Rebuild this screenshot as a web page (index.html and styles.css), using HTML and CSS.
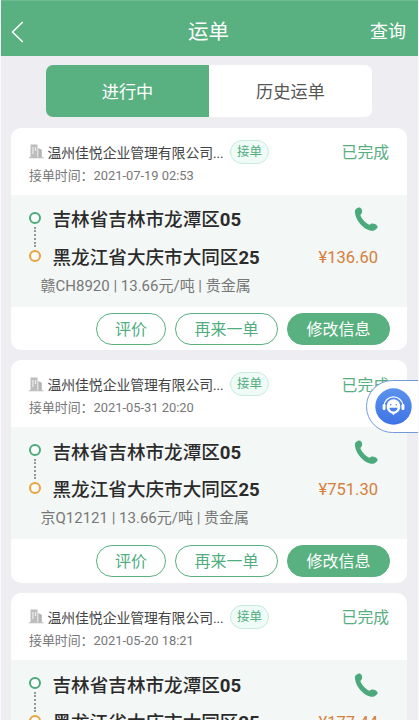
FILE: index.html
```html
<!DOCTYPE html>
<html lang="zh-CN">
<head>
<meta charset="utf-8">
<title>运单</title>
<link rel="stylesheet" href="styles.css">
</head>
<body>
<svg class="defs" width="0" height="0" aria-hidden="true">
  <symbol id="building" viewBox="0 0 15 16">
    <path d="M1.500 1.500h7v13h-7z" fill="#bdbdbd"/>
    <path d="M9.300 5l3.500 1.800v7.700H9.300z" fill="#b4b4b4"/>
    <path d="M3.300 4h1.200v7H3.300zM5.900 4h1.200v4H5.900z" fill="#ececec"/>
    <path d="M0 14.200h14.500v1H0z" fill="#b4b4b4"/>
  </symbol>
  <symbol id="phone" viewBox="0 0 24 24">
    <path d="M1 3.500C2 1.500 4.500-.2 6.300.8c1.700 1 2.300 3.600 1.500 5.100C7.300 7 6.100 7.400 6.500 8.600c1.200 3.300 4.700 7.200 8.300 9 1.300.6 1.700-.8 3-1.100 2-.4 5 1.100 5.700 2.700.7 1.800-1.700 4-4 4.500C11.500 25 .2 13 1 3.500z" fill="#4ba97b"/>
  </symbol>
</svg>
<div class="screen">
  <header class="bar">
    <svg class="back" viewBox="0 0 13 22"><path d="M11.800 1L1.500 11l10.300 10" fill="none" stroke="#fff" stroke-width="1.500"/></svg>
    <h1>运单</h1>
    <span class="query">查询</span>
  </header>
  <nav class="tabs"><span class="tab active">进行中</span><span class="tab">历史运单</span></nav>
  <main class="list">
    <article class="card">
      <div class="head">
        <div class="line"><svg class="building"><use href="#building"/></svg><span class="company">温州佳悦企业管理有限公司...</span><span class="tag">接单</span><span class="status">已完成</span></div>
        <p class="time">接单时间：<span>2021-07-19 02:53</span></p>
      </div>
      <div class="body">
        <div class="rail"><i class="dot"></i><i class="dash"></i><i class="dot end"></i></div>
        <div class="row"><b>吉林省吉林市龙潭区<strong>05</strong></b><svg class="phone"><use href="#phone"/></svg></div>
        <div class="row"><b>黑龙江省大庆市大同区<strong>25</strong></b><span class="price">¥136.60</span></div>
        <p class="info">赣CH8920 | 13.66元/吨 | 贵金属</p>
      </div>
      <div class="foot"><span class="btn short">评价</span><span class="btn">再来一单</span><span class="btn solid">修改信息</span></div>
    </article>
    <article class="card">
      <div class="head">
        <div class="line"><svg class="building"><use href="#building"/></svg><span class="company">温州佳悦企业管理有限公司...</span><span class="tag">接单</span><span class="status">已完成</span></div>
        <p class="time">接单时间：<span>2021-05-31 20:20</span></p>
      </div>
      <div class="body">
        <div class="rail"><i class="dot"></i><i class="dash"></i><i class="dot end"></i></div>
        <div class="row"><b>吉林省吉林市龙潭区<strong>05</strong></b><svg class="phone"><use href="#phone"/></svg></div>
        <div class="row"><b>黑龙江省大庆市大同区<strong>25</strong></b><span class="price">¥751.30</span></div>
        <p class="info">京Q12121 | 13.66元/吨 | 贵金属</p>
      </div>
      <div class="foot"><span class="btn short">评价</span><span class="btn">再来一单</span><span class="btn solid">修改信息</span></div>
    </article>
    <article class="card">
      <div class="head">
        <div class="line"><svg class="building"><use href="#building"/></svg><span class="company">温州佳悦企业管理有限公司...</span><span class="tag">接单</span><span class="status">已完成</span></div>
        <p class="time">接单时间：<span>2021-05-20 18:21</span></p>
      </div>
      <div class="body">
        <div class="rail"><i class="dot"></i><i class="dash"></i><i class="dot end"></i></div>
        <div class="row"><b>吉林省吉林市龙潭区<strong>05</strong></b><svg class="phone"><use href="#phone"/></svg></div>
        <div class="row"><b>黑龙江省大庆市大同区<strong>25</strong></b><span class="price">¥177.44</span></div>
      </div>
    </article>
  </main>
  <div class="service">
    <svg viewBox="0 0 38 38">
      <defs><linearGradient id="blue" x1="0" y1="0" x2="0" y2="1"><stop offset="0" stop-color="#5a93ec"/><stop offset="1" stop-color="#3f73e6"/></linearGradient></defs>
      <circle cx="19" cy="19" r="18.700" fill="url(#blue)"/>
      <path d="M9.500 18a9.500 8.800 0 0 1 19 0" fill="none" stroke="#fff" stroke-width="1.200"/>
      <rect x="7.800" y="16.500" width="3" height="6" rx="1.300" fill="#fff"/>
      <rect x="27.200" y="16.500" width="3" height="6" rx="1.300" fill="#fff"/>
      <path d="M12 18.500a7 7 0 0 1 14 0c0 4-2.300 7-5.500 7.700L19 28l-1.500-1.800C14.300 25.500 12 22.500 12 18.500z" fill="#fff"/>
      <circle cx="16.200" cy="17.300" r=".8" fill="#4a80e8"/><circle cx="21.800" cy="17.300" r=".8" fill="#4a80e8"/>
      <path d="M14.800 20.300h8.400c0 5-8.400 5-8.400 0z" fill="#4a80e8"/>
    </svg>
  </div>
</div>
</body>
</html>
```
FILE: styles.css
```css
* { box-sizing: border-box; margin: 0; padding: 0; }
body { font-family: Roboto, "Noto Sans CJK SC", sans-serif; color: #444; }
.defs { display: block; position: absolute; }
.screen { position: relative; width: 419px; height: 720px; overflow: hidden; background: #eeedf2; border: solid #fafafc; border-width: 0 1px; }
.bar { height: 56px; padding: 6px 12px 0 10px; display: grid; grid-template-columns: 1fr auto 1fr; align-items: center; background: #59b080; color: #fff; border-top: 1px solid #6fbb91; }
.back { width: 13px; height: 22px; }
.bar h1 { font-size: 20.5px; font-weight: 400; line-height: 30px; }
.query { justify-self: end; font-size: 18px; line-height: 28px; }
.tabs { display: flex; width: 326px; height: 52px; margin: 9px 0 0 45px; border-radius: 7px; overflow: hidden; }
.tab { flex: 1; background: #fff; font-size: 17.2px; line-height: 54px; text-align: center; color: #555; }
.tab.active { background: #59b080; color: #fff; }
.list { display: flex; flex-direction: column; gap: 10.2px; padding: 10.5px 11px 0 10px; }
.card { height: 222.5px; flex: none; border-radius: 10px; background: #fff; overflow: hidden; }
.head { height: 67px; padding: 12px 18px 0; }
.line { display: flex; align-items: center; height: 24px; }
.building { width: 15px; height: 16px; margin-right: 3.5px; margin-top: -1px; }
.company { font-size: 13.9px; letter-spacing: -0.1px; width: 182.5px; white-space: nowrap; color: #444; }
.tag { width: 39px; height: 24px; border: 1px solid #c8e9dc; border-radius: 12px; background: #effbf7; color: #4fae80; font-size: 12.5px; line-height: 22px; text-align: center; }
.status { margin-left: auto; font-size: 15.8px; color: #57ae80; }
.time { font-size: 12.9px; line-height: 20px; margin-top: 2px; color: #777; white-space: nowrap; }
.body { height: 112px; position: relative; background: #f3f7f6; padding: 6px 29px 0 41.5px; }
.rail { position: absolute; left: 17.5px; top: 17px; width: 12px; display: flex; flex-direction: column; align-items: center; }
.dot { width: 12px; height: 12px; border: 2.5px solid #4ba97b; border-radius: 50%; background: #fff; }
.dot.end { border-color: #eba33c; }
.dash { height: 20px; margin: 3px 0; width: 0; border-left: 2px dotted #909899; }
.row { height: 37.5px; display: flex; align-items: center; justify-content: space-between; white-space: nowrap; }
.row b { font-size: 18.6px; font-weight: 500; color: #2b2b2b; margin-top: -3px; }
.row strong { font-weight: 700; }
.phone { width: 24px; height: 24px; }
.price { font-size: 16.5px; color: #d5803c; margin-top: 1px; }
.info { margin-left: -12px; font-size: 15px; line-height: 20px; color: #777; white-space: nowrap; }
.foot { display: flex; justify-content: flex-end; gap: 9px; padding: 6px 17px 0; }
.btn { width: 103px; height: 32px; border: 1.5px solid #59b080; border-radius: 16px; color: #4fae80; font-size: 16px; line-height: 31px; text-align: center; }
.btn.short { width: 70px; }
.btn.solid { background: #59b080; color: #fff; }
.service { position: absolute; left: 364.5px; top: 380px; width: 60px; height: 53px; padding: 7px 8px; background: #fff; border: 1px solid #739ad8; border-radius: 27px 0 0 27px; }
.service svg { display: block; width: 37px; height: 37px; }
```
